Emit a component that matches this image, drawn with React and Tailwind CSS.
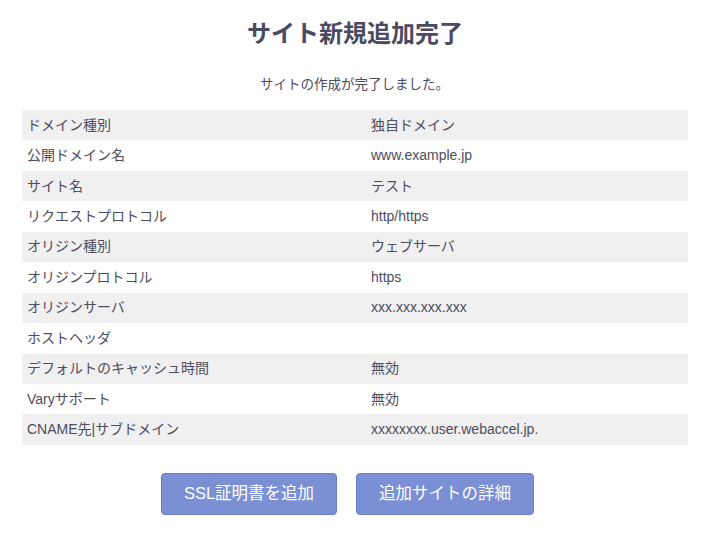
const rows = [
  ['ドメイン種別', '独自ドメイン'],
  ['公開ドメイン名', 'www.example.jp'],
  ['サイト名', 'テスト'],
  ['リクエストプロトコル', 'http/https'],
  ['オリジン種別', 'ウェブサーバ'],
  ['オリジンプロトコル', 'https'],
  ['オリジンサーバ', 'xxx.xxx.xxx.xxx'],
  ['ホストヘッダ', ''],
  ['デフォルトのキャッシュ時間', '無効'],
  ['Varyサポート', '無効'],
  ['CNAME先|サブドメイン', 'xxxxxxxx.user.webaccel.jp.'],
];

const App = () => {
  return (
    <div
      className="w-[711px] min-h-[538px] bg-white text-[#4d4d5e] pt-[18px]"
      style={{ fontFamily: '"Liberation Sans", "Noto Sans CJK JP", sans-serif' }}
    >
      <h1 className="text-center text-[24px] font-bold leading-[32px] text-[#4a4a63] pr-[1px]">
        サイト新規追加完了
      </h1>
      <p className="text-center text-[13.5px] leading-[20px] mt-[25px] pr-[2px]">
        サイトの作成が完了しました。
      </p>
      <table className="ml-[22px] mt-[15px] w-[666px] border-collapse text-[14px]">
        <tbody>
          {rows.map(([k, v], i) => (
            <tr key={k} className={i % 2 === 0 ? 'bg-[#f0f0f0]' : 'bg-white'}>
              <td className="w-[344px] h-[30.45px] pl-[5px] align-middle">{k}</td>
              <td className="h-[30.45px] pl-[5px] align-middle">{v}</td>
            </tr>
          ))}
        </tbody>
      </table>
      <div className="flex justify-center gap-[19px] mt-[28px] pr-[16px]">
        <button className="w-[176px] h-[42px] rounded-[4px] border border-[#6a7ec4] bg-[#7b8fd4] text-white text-[16.5px]">
          SSL証明書を追加
        </button>
        <button className="w-[178px] h-[42px] rounded-[4px] border border-[#6a7ec4] bg-[#7b8fd4] text-white text-[16.5px]">
          追加サイトの詳細
        </button>
      </div>
    </div>
  );
};

export default App;
